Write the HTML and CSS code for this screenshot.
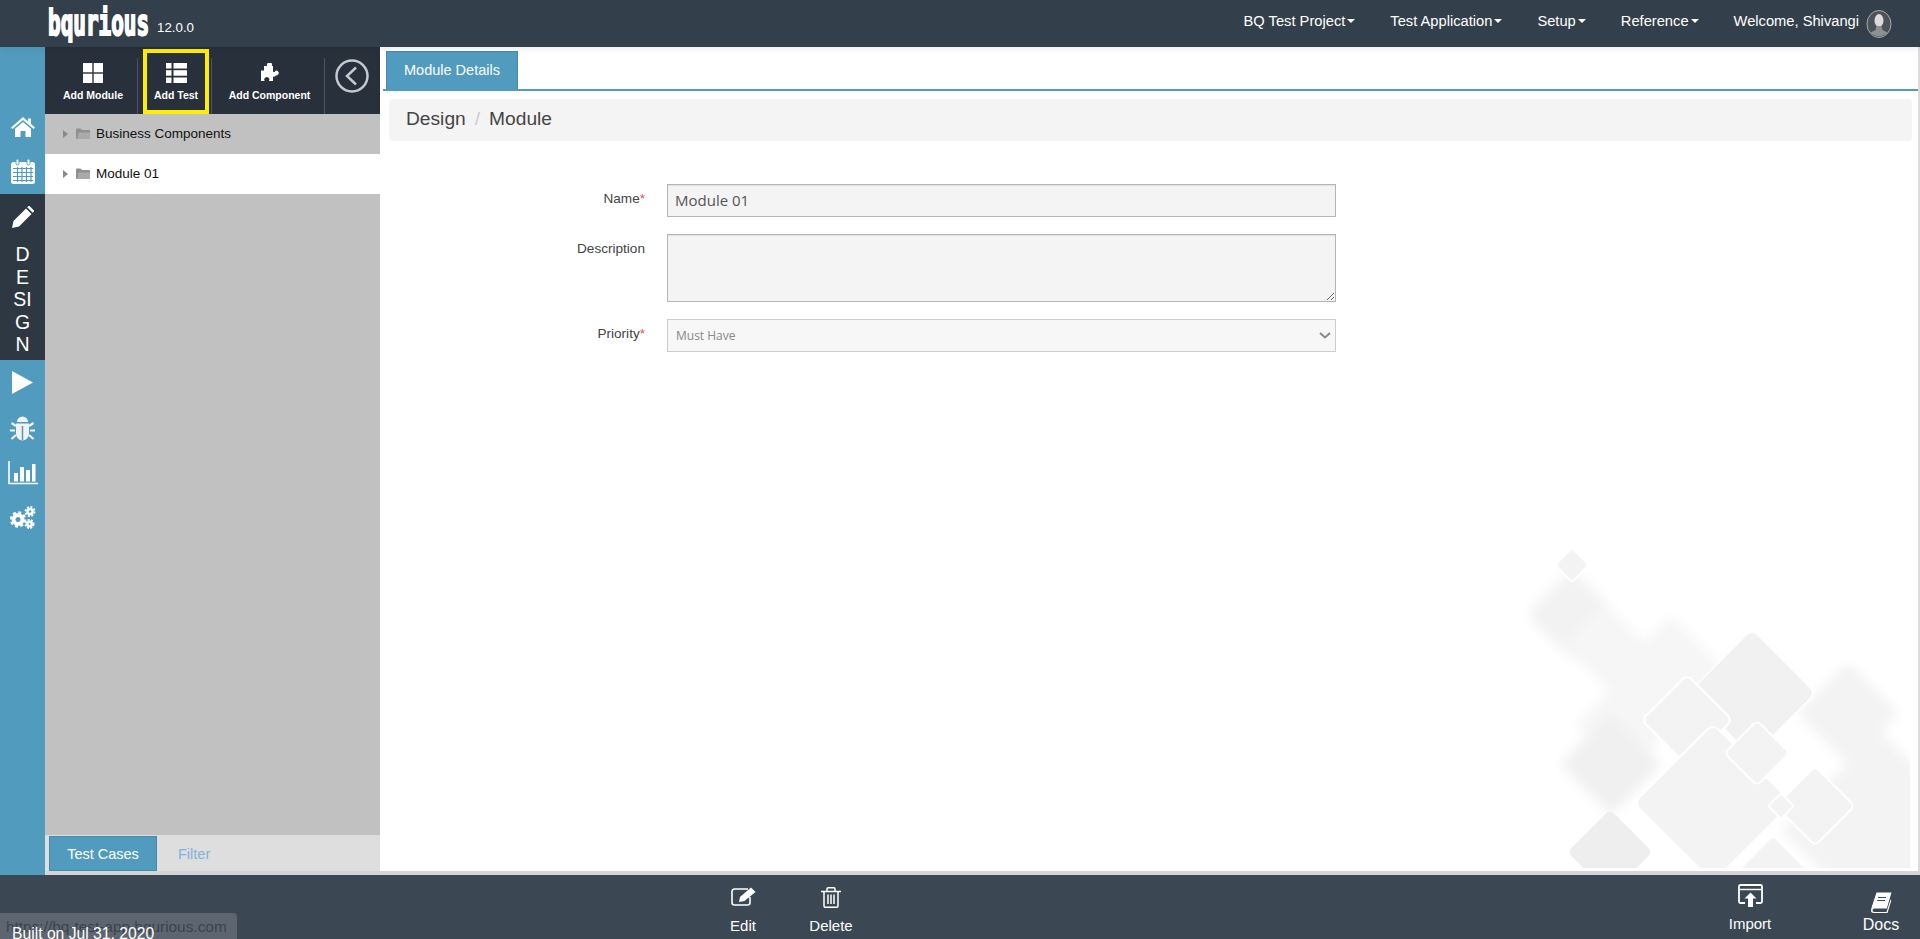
FILE: index.html
```html
<!DOCTYPE html>
<html>
<head>
	<meta charset="UTF-8">
	<title>bqurious - Design</title>
	<link rel="stylesheet" href="styles.css">
</head>
<body>
	<header class="topbar">
		<div class="brand">
			<span class="logo">bqurious</span>
			<span class="version">12.0.0</span>
		</div>
		<nav class="topnav">
			<a class="nav-item">BQ Test Project<i class="caret"></i></a>
			<a class="nav-item">Test Application<i class="caret"></i></a>
			<a class="nav-item">Setup<i class="caret"></i></a>
			<a class="nav-item">Reference<i class="caret"></i></a>
			<a class="nav-item">Welcome, Shivangi
				<svg class="avatar" viewBox="0 0 26 28">
					<ellipse cx="13" cy="14" rx="12" ry="13.500" fill="#4c5258" stroke="#a9acae" stroke-width="1"/>
					<ellipse cx="13" cy="10.500" rx="4.500" ry="6.500" fill="#dcdcdc"/>
					<path d="M10.500 16h5l1 4 5 2.500a12 13 0 0 1-17 0l5-2.500z" fill="#8d8f91"/>
				</svg>
			</a>
		</nav>
	</header>

	<div class="workspace">
		<aside class="rail">
			<a class="rail-item">
				<svg width="24" height="20" viewBox="0 0 24 20"><path d="M12 0l5 4.400V1.500h3v5.500l4 3.500-1.400 1.600L12 3 1.400 12.100 0 10.500z M12 5l8 6.800V20h-5.500v-6h-5v6H4v-8.200z" fill="#fff"/></svg>
			</a>
			<a class="rail-item">
				<svg width="24" height="25" viewBox="0 0 24 25">
					<rect x="0" y="3" width="24" height="22" rx="2.500" fill="#fff"/>
					<rect x="5" y="0" width="3" height="6" rx="1.500" fill="#fff" stroke="#519bbf"/>
					<rect x="16" y="0" width="3" height="6" rx="1.500" fill="#fff" stroke="#519bbf"/>
					<path d="M2 9.500h20M2 13.500h20M2 17.500h20M2 21.500h20M6.500 8v15M11 8v15M15.500 8v15M20 8v15" stroke="#519bbf" stroke-width="1.200"/>
				</svg>
			</a>
			<a class="rail-item rail-active">
				<svg width="22" height="22" viewBox="0 0 22 22"><path d="M0 22l1.500-7L14 2.500l5.500 5.500L7 20.500z M15.200 1.300l1-1q.8-.6 1.600 0l3.900 3.900q.6.8 0 1.600l-1 1z" fill="#fff"/></svg>
				<span class="rail-label">D<br>E<br>SI<br>G<br>N</span>
			</a>
			<a class="rail-item">
				<svg width="21" height="23" viewBox="0 0 21 23"><path d="M0 0l21 11.500L0 23z" fill="#fff"/></svg>
			</a>
			<a class="rail-item">
				<svg width="25" height="26" viewBox="0 0 25 26">
					<path d="M7 7a5.500 5.500 0 0 1 11 0z" fill="#f2f2f2"/>
					<path d="M6 8.500h13V19a6.500 6.500 0 0 1-13 0z" fill="#f2f2f2"/>
					<path d="M12.500 11v14" stroke="#519bbf" stroke-width="1.500"/>
					<path d="M6 11L1.500 8M19 11l4.500-3M5 15.500H0M20 15.500h5M6 20l-4.500 4M19 20l4.500 4" stroke="#f2f2f2" stroke-width="2.200"/>
				</svg>
			</a>
			<a class="rail-item">
				<svg width="30" height="24" viewBox="0 0 30 24">
					<path d="M1 0v22.500h29" fill="none" stroke="#fff" stroke-width="1.600"/>
					<rect x="6" y="12" width="4" height="8.500" fill="#fff"/>
					<rect x="12" y="6" width="4" height="14.500" fill="#fff"/>
					<rect x="18" y="9" width="4" height="11.500" fill="#fff"/>
					<rect x="24" y="3" width="3.500" height="17.500" fill="#fff"/>
				</svg>
			</a>
			<a class="rail-item">
				<svg width="26" height="23" viewBox="0 0 26 23">
					<circle cx="8" cy="13.500" r="4.500" fill="none" stroke="#fff" stroke-width="4"/>
					<circle cx="8" cy="13.500" r="7" fill="none" stroke="#fff" stroke-width="2.500" stroke-dasharray="3 2.500"/>
					<circle cx="20" cy="5.500" r="2.500" fill="none" stroke="#fff" stroke-width="2.500"/>
					<circle cx="20" cy="5.500" r="4.500" fill="none" stroke="#fff" stroke-width="2" stroke-dasharray="2 1.500"/>
					<circle cx="19.500" cy="18" r="2.200" fill="none" stroke="#fff" stroke-width="2.500"/>
					<circle cx="19.500" cy="18" r="4" fill="none" stroke="#fff" stroke-width="2" stroke-dasharray="2 1.300"/>
				</svg>
			</a>
		</aside>

		<section class="panel">
			<div class="toolbar">
				<a class="tool tool-module">
					<svg width="20" height="20" viewBox="0 0 20 20" fill="#fff">
						<rect width="9.300" height="9.300"/><rect x="10.700" width="9.300" height="9.300"/>
						<rect y="10.700" width="9.300" height="9.300"/><rect x="10.700" y="10.700" width="9.300" height="9.300"/>
					</svg>
					Add Module
				</a>
				<span class="tool-sep"></span>
				<a class="tool tool-test">
					<svg width="21" height="20" viewBox="0 0 21 20" fill="#fff">
						<rect width="5.500" height="5.500"/><rect x="7.500" width="13.500" height="5.500"/>
						<rect y="7.200" width="5.500" height="5.500"/><rect x="7.500" y="7.200" width="13.500" height="5.500"/>
						<rect y="14.500" width="5.500" height="5.500"/><rect x="7.500" y="14.500" width="13.500" height="5.500"/>
					</svg>
					Add Test
				</a>
				<span class="tool-sep"></span>
				<a class="tool tool-component">
					<svg width="20" height="18" viewBox="0 0 20 18"><path d="M4 3h3.200a2.600 2.600 0 1 1 4.600 0H13v6a2.400 2.400 0 1 1 0 4.500V18H8.800a2.500 2.500 0 1 0-4 0H1V7.500h3z M15 8.200a2.300 2.300 0 1 1 0 3.600z" fill="#fff"/></svg>
					Add Component
				</a>
				<span class="tool-sep"></span>
				<a class="collapse">
					<svg width="34" height="34" viewBox="0 0 34 34" fill="none" stroke="#c3c9cc">
						<circle cx="17" cy="17" r="15.500" stroke-width="2.500"/>
						<path d="M21 8.500L12 17l9 8.500" stroke-width="2.500"/>
					</svg>
				</a>
			</div>

			<ul class="tree">
				<li class="tree-row">
					<i class="tree-arrow"></i>
					<svg class="tree-folder" width="14" height="11" viewBox="0 0 14 11"><path d="M0 1.500Q0 .5 1 .5h3.500L6 2h7q1 0 1 1v7q0 1-1 1H1q-1 0-1-1z" fill="#8f9090"/><path d="M2.500 4.500H14V10q0 1-1 1H1.500z" fill="#a9aaaa"/></svg>
					Business Components
				</li>
				<li class="tree-row tree-selected">
					<i class="tree-arrow"></i>
					<svg class="tree-folder" width="14" height="11" viewBox="0 0 14 11"><path d="M0 1.500Q0 .5 1 .5h3.500L6 2h7q1 0 1 1v7q0 1-1 1H1q-1 0-1-1z" fill="#8f9090"/><path d="M2.500 4.500H14V10q0 1-1 1H1.500z" fill="#a9aaaa"/></svg>
					Module 01
				</li>
			</ul>

			<div class="panel-tabs">
				<a class="panel-tab panel-tab-on">Test Cases</a>
				<a class="panel-tab">Filter</a>
			</div>
		</section>

		<main class="content">
			<!-- background artwork, bottom right corner -->
			<svg class="watermark" width="410" height="338" viewBox="1500 530 410 338">
				<defs>
					<filter id="soft" x="-30%" y="-30%" width="160%" height="160%"><feGaussianBlur stdDeviation="6"/></filter>
				</defs>
				<g filter="url(#soft)" fill="#f6f6f6">
					<rect x="1540" y="583" width="64" height="64" rx="6" transform="rotate(45 1572 615)" fill="#f2f2f2"/>
					<rect x="1565" y="640" width="130" height="60" rx="6" transform="rotate(45 1630 670)"/>
					<rect x="1640" y="640" width="90" height="50" rx="6" transform="rotate(45 1685 665)"/>
					<rect x="1590" y="690" width="70" height="70" rx="6" transform="rotate(45 1625 725)"/>
					<rect x="1575" y="728" width="72" height="72" rx="6" transform="rotate(45 1611 764)" fill="#f0f0f0"/>
					<rect x="1812" y="677" width="72" height="72" rx="6" transform="rotate(45 1848 713)" fill="#f3f3f3"/>
					<rect x="1810" y="760" width="140" height="140" rx="4" transform="rotate(45 1880 830)" fill="#f3f3f3"/>
				</g>
				<g fill="#f3f3f3" stroke="#fff" stroke-width="2">
					<rect x="1560" y="553" width="24" height="24" rx="3" transform="rotate(45 1572 565)"/>
					<rect x="1580" y="822" width="60" height="60" rx="5" transform="rotate(45 1610 852)" fill="#eeeeee" stroke="none"/>
					<rect x="1707" y="648" width="90" height="90" rx="7" transform="rotate(45 1752 693)" fill="#f1f1f1" stroke-width="1.500"/>
					<rect x="1655" y="688" width="64" height="64" rx="6" transform="rotate(45 1687 720)"/>
					<rect x="1657" y="747" width="112" height="112" rx="8" transform="rotate(45 1713 803)"/>
					<rect x="1734" y="730" width="46" height="46" rx="5" transform="rotate(45 1757 753)"/>
					<rect x="1787" y="778" width="56" height="56" rx="5" transform="rotate(45 1815 806)"/>
					<rect x="1772" y="797" width="18" height="18" rx="2" transform="rotate(45 1781 806)"/>
					<rect x="1738" y="850" width="70" height="70" rx="5" transform="rotate(45 1773 885)"/>
				</g>
			</svg>

			<div class="tabs">
				<a class="tab">Module Details</a>
			</div>
			<div class="breadcrumb">
				<span>Design</span>
				<span class="crumb-sep">/</span>
				<span>Module</span>
			</div>

			<form class="form">
				<label class="form-label">Name<em>*</em></label>
				<input class="field field-name" type="text" value="Module 01">
				<label class="form-label">Description</label>
				<textarea class="field field-desc"></textarea>
				<label class="form-label">Priority<em>*</em></label>
				<div class="select-wrap">
					<select class="field field-select"><option>Must Have</option></select>
					<svg class="select-arrow" width="12" height="7" viewBox="0 0 12 7" fill="none" stroke="#888" stroke-width="2"><path d="M1 1l5 4.500L11 1"/></svg>
				</div>
			</form>
		</main>
	</div>

	<footer class="bottombar">
		<a class="action action-edit">
			<svg width="25" height="19" viewBox="0 0 25 19" fill="none" stroke="#fff" stroke-width="1.600">
				<path d="M19 10v5.500a2.500 2.500 0 0 1-2.500 2.500h-13A2.500 2.500 0 0 1 1 15.500v-11A2.500 2.500 0 0 1 3.500 2H17"/>
				<path d="M8 15l1-5L20 .5l4.500 4.500L13.500 14z" fill="#fff" stroke="none"/>
			</svg>
			Edit
		</a>
		<a class="action action-delete">
			<svg width="20" height="21" viewBox="0 0 20 21" fill="none" stroke="#fff" stroke-width="1.500">
				<path d="M0 4.500h20M6 4.500V2q0-1.200 1.200-1.200h5.600Q14 .8 14 2v2.500"/>
				<path d="M3 4.500V19q0 1.300 1.300 1.300h11.400Q17 20.300 17 19V4.500"/>
				<path d="M7 7.500v9.500M10 7.500v9.500M13 7.500v9.500"/>
			</svg>
			Delete
		</a>
		<a class="action action-import">
			<svg width="25" height="23" viewBox="0 0 25 23">
				<path d="M7 19H2.500Q1 19 1 17.500V2.500Q1 1 2.500 1h20Q24 1 24 2.500v15q0 1.500-1.500 1.500H18" fill="none" stroke="#fff" stroke-width="1.800"/>
				<path d="M1 5.500h23" stroke="#fff" stroke-width="1.500"/>
				<path d="M12.500 8.500l6 6h-3.500V23h-5v-8.500H6.500z" fill="#fff"/>
			</svg>
			Import
		</a>
		<a class="action action-docs">
			<svg width="21" height="21" viewBox="0 0 21 21">
				<path d="M5.500.5H20.500L15.800 16.500H3.500Q1.800 16.500 1.500 18t1.500 2h12.500l4-12.500.8 1-3.800 12.500H3Q0 21 0 18.500 0 17.500 1 14z" fill="#fff"/>
				<path d="M7 5.500h8M6.200 8.500h8" stroke="#3b4753" stroke-width="1.200"/>
			</svg>
			Docs
		</a>
	</footer>

	<div class="status-tip">
		<span class="status-url">https://bq-test-app.bqurious.com</span>
		<span class="status-built">Built on Jul 31, 2020</span>
	</div>
</body>
</html>
```

FILE: styles.css
```css
* {
	box-sizing: border-box;
}

html, body {
	height: 100%;
}

body {
	margin: 0;
	height: 939px;
	overflow: hidden;
	display: flex;
	flex-direction: column;
	font-family: "Liberation Sans", Arial, sans-serif;
	font-size: 14px;
	color: #333;
	background: #d5d5d5;
}

a {
	color: inherit;
	text-decoration: none;
}

/* top bar */

.topbar {
	height: 47px;
	flex: none;
	display: flex;
	align-items: center;
	justify-content: space-between;
	background: #333f4b;
	color: #fff;
	position: relative;
	z-index: 2;
	box-shadow: 0 2px 6px rgba(0, 0, 0, 0.08);
}

.brand {
	display: flex;
	align-items: center;
	padding-left: 48px;
	height: 47px;
}

.logo {
	width: 100px;
	height: 47px;
	font-family: "DejaVu Sans Mono", monospace;
	font-size: 35px;
	font-weight: bold;
	line-height: 47px;
	white-space: nowrap;
	transform: scaleX(0.6);
	transform-origin: left center;
	-webkit-text-stroke: 2px #fff;
}

.version {
	font-size: 13.300px;
	margin-left: 9px;
	margin-top: 7px;
}

.topnav {
	display: flex;
	align-items: center;
	gap: 35px;
	padding: 0 28px 6px 0;
	font-size: 14.700px;
}

.nav-item {
	display: flex;
	align-items: center;
}

.caret {
	width: 0;
	height: 0;
	margin-left: 2px;
	border-left: 4px solid transparent;
	border-right: 4px solid transparent;
	border-top: 4px solid #fff;
}

.avatar {
	width: 26px;
	height: 28px;
	margin: 6px 0 0 7px;
}

/* middle */

.workspace {
	flex: 1;
	display: flex;
	min-height: 0;
}

.rail {
	width: 45px;
	flex: none;
	padding-top: 57px;
	background: #519bbf;
	display: flex;
	flex-direction: column;
}

.rail-item {
	height: 45px;
	flex: none;
	display: flex;
	align-items: center;
	justify-content: center;
}

.rail-active {
	height: 166px;
	flex-direction: column;
	justify-content: flex-start;
	padding-top: 12px;
	background: #2d3842;
	color: #fff;
}

.rail-label {
	font-size: 19.500px;
	line-height: 22.500px;
	text-align: center;
	margin-top: 15px;
}

.panel {
	width: 335px;
	flex: none;
	margin-bottom: 4px;
	display: flex;
	flex-direction: column;
	background: #c0c1c0;
}

.toolbar {
	height: 67px;
	flex: none;
	padding-top: 2px;
	display: flex;
	background: #28313b;
	color: #fff;
}

.tool {
	display: flex;
	flex-direction: column;
	align-items: center;
	gap: 6px;
	padding-top: 14px;
	font-size: 10.500px;
	font-weight: bold;
	white-space: nowrap;
}

.tool-module {
	width: 92px;
	padding-left: 4px;
}

.tool-test {
	width: 66px;
	margin: 0 2px 0 5px;
	padding-top: 10px;
	border: 4px solid #ffee00;
}

.tool-component {
	width: 112px;
	padding-left: 3px;
}

.tool-component svg {
	margin-bottom: 2px;
}

.tool-sep {
	width: 1px;
	height: 56px;
	align-self: flex-end;
	background: #4b555f;
}

.collapse {
	margin: 10px 0 0 10px;
	height: 34px;
}

.tree {
	list-style: none;
	margin: 0;
	padding: 0;
	flex: 1;
	font-size: 13.500px;
}

.tree-row {
	height: 40px;
	display: flex;
	align-items: center;
	padding: 0 0 1px 18px;
	color: #111;
}

.tree-selected {
	background: #fff;
}

.tree-arrow {
	width: 0;
	height: 0;
	border-top: 4px solid transparent;
	border-bottom: 4px solid transparent;
	border-left: 5px solid #8a8a8a;
}

.tree-folder {
	margin: 0 6px 0 8px;
}

.panel-tabs {
	height: 36px;
	flex: none;
	display: flex;
	padding-left: 4px;
	background: #dedede;
	font-size: 14.500px;
}

.panel-tab {
	height: 35px;
	margin-top: 1px;
	padding-left: 21px;
	display: flex;
	align-items: center;
	color: #7db4e0;
}

.panel-tab-on {
	width: 108px;
	padding-left: 0;
	justify-content: center;
	background: #519bbf;
	border: 1px solid #428bb0;
	color: #fff;
}

/* main content */

.content {
	flex: 1;
	min-width: 0;
	margin-bottom: 4px;
	position: relative;
	background: #fff;
	border-right: 2px solid #dcdcdc;
	padding: 4px 0 0 3px;
}

.watermark {
	position: absolute;
	right: 8px;
	bottom: 3px;
}

.tabs {
	position: relative;
	height: 40px;
	padding-left: 3px;
	border-bottom: 2px solid #519bbf;
}

.tab {
	display: flex;
	align-items: center;
	justify-content: center;
	width: 132px;
	height: 38px;
	padding-bottom: 2px;
	background: #519bbf;
	border: 1px solid #428bb0;
	border-bottom: 0;
	color: #fff;
	font-size: 14.500px;
}

.breadcrumb {
	position: relative;
	height: 42px;
	margin: 8px 6px 0 6px;
	padding: 0 17px 2px;
	display: flex;
	align-items: center;
	gap: 9px;
	font-size: 19.200px;
	color: #444;
	background: #f4f4f4;
	border-radius: 4px;
}

.crumb-sep {
	color: #ccc;
}

.form {
	position: relative;
	display: grid;
	grid-template-columns: 262px 669px;
	column-gap: 22px;
	row-gap: 17px;
	margin-top: 43px;
}

.form-label {
	padding-top: 6px;
	line-height: 18px;
	font-size: 13.600px;
	text-align: right;
	color: #444;
}

.form-label em {
	font-style: normal;
	color: #d9534f;
}

.field {
	display: block;
	width: 100%;
	margin: 0;
	background: #f4f4f4;
	border: 1px solid #b5b5b5;
	box-shadow: inset 0 1px 1px rgba(0, 0, 0, 0.08);
	font-family: "Open Sans", sans-serif;
	color: #555;
	outline: none;
}

.field-name {
	height: 33px;
	padding: 0 7px 2px;
	font-size: 15px;
}

.field-desc {
	height: 68px;
	padding: 7px;
	resize: vertical;
}

.select-wrap {
	position: relative;
}

.field-select {
	height: 33px;
	padding: 0 8px;
	font-size: 12px;
	color: #888;
	background: #f7f7f7;
	border-color: #ccc;
	box-shadow: none;
	border-radius: 0;
	appearance: none;
}

.select-arrow {
	position: absolute;
	right: 5px;
	top: 13px;
}

/* bottom bar */

.bottombar {
	height: 64px;
	flex: none;
	display: flex;
	padding-left: 703px;
	background: #3b4753;
	color: #fff;
	font-size: 15px;
}

.action {
	width: 80px;
	padding-top: 12px;
	display: flex;
	flex-direction: column;
	align-items: center;
	gap: 11px;
}

.action-delete {
	margin-left: 8px;
	gap: 9px;
}

.action-import {
	width: 70px;
	margin-left: auto;
	padding-top: 9px;
	gap: 8px;
}

.action-docs {
	width: 70px;
	margin: 0 4px 0 61px;
	padding-top: 17px;
	gap: 3px;
	font-size: 16px;
}

/* browser status bubble over the footer */

.status-tip {
	position: absolute;
	left: 0;
	bottom: 0;
	width: 237px;
	height: 26px;
	background: #5d6670;
	border-top-right-radius: 4px;
	overflow: hidden;
}

.status-url {
	position: absolute;
	left: 6px;
	top: 5px;
	font-size: 15.400px;
	white-space: nowrap;
	color: #3a444e;
}

.status-built {
	position: absolute;
	left: 12px;
	top: 12px;
	font-size: 15.700px;
	white-space: nowrap;
	color: #fff;
}
```
